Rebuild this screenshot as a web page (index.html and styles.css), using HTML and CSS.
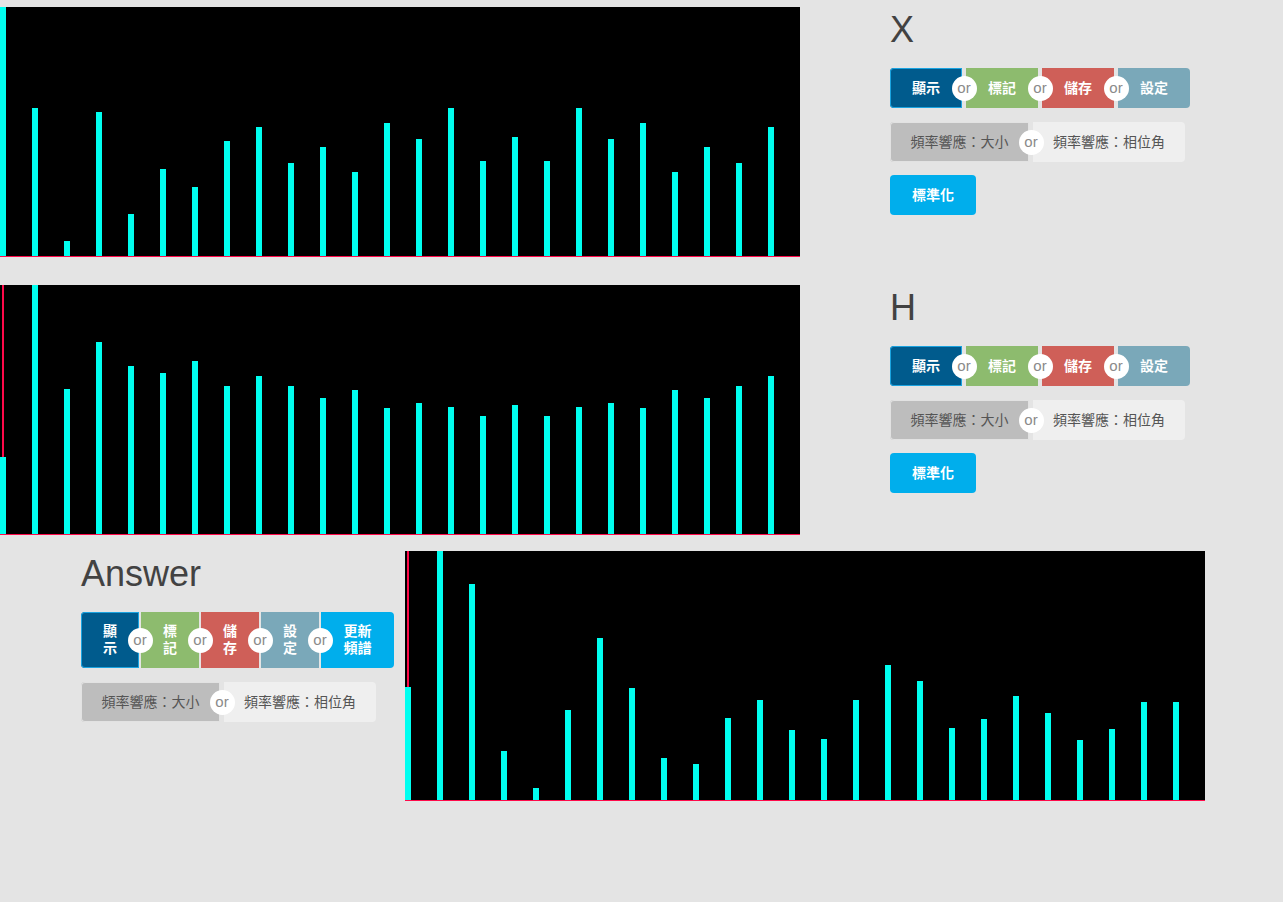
FILE: index.html
```html
<!DOCTYPE html>
<html lang="zh-Hant">
<head>
<meta charset="utf-8">
<title>Spectrum</title>
<link rel="stylesheet" href="styles.css">
</head>
<body>
<div class="page">
  <section class="row">
    <div class="chart">
      <div class="bar" style="height:249px"></div><div class="bar" style="height:148px"></div><div class="bar" style="height:15px"></div><div class="bar" style="height:144px"></div><div class="bar" style="height:42px"></div><div class="bar" style="height:87px"></div><div class="bar" style="height:69px"></div><div class="bar" style="height:115px"></div><div class="bar" style="height:129px"></div><div class="bar" style="height:93px"></div><div class="bar" style="height:109px"></div><div class="bar" style="height:84px"></div><div class="bar" style="height:133px"></div><div class="bar" style="height:117px"></div><div class="bar" style="height:148px"></div><div class="bar" style="height:95px"></div><div class="bar" style="height:119px"></div><div class="bar" style="height:95px"></div><div class="bar" style="height:148px"></div><div class="bar" style="height:117px"></div><div class="bar" style="height:133px"></div><div class="bar" style="height:84px"></div><div class="bar" style="height:109px"></div><div class="bar" style="height:93px"></div><div class="bar" style="height:129px"></div>
    </div>
    <div class="panel">
      <h1 class="title">X</h1>
      <div class="btns colored">
        <button class="btn blue active">顯示</button><span class="or"></span><button class="btn green">標記</button><span class="or"></span><button class="btn red">儲存</button><span class="or"></span><button class="btn slate">設定</button>
      </div>
      <div class="btns toggle">
        <button class="tbtn on">頻率響應：大小</button><span class="or"></span><button class="tbtn off">頻率響應：相位角</button>
      </div>
      <button class="btn cyan solo">標準化</button>
    </div>
  </section>

  <section class="row">
    <div class="chart">
      <div class="bar" style="height:77px"></div><div class="bar" style="height:249px"></div><div class="bar" style="height:145px"></div><div class="bar" style="height:192px"></div><div class="bar" style="height:168px"></div><div class="bar" style="height:161px"></div><div class="bar" style="height:173px"></div><div class="bar" style="height:148px"></div><div class="bar" style="height:158px"></div><div class="bar" style="height:148px"></div><div class="bar" style="height:136px"></div><div class="bar" style="height:144px"></div><div class="bar" style="height:126px"></div><div class="bar" style="height:131px"></div><div class="bar" style="height:127px"></div><div class="bar" style="height:118px"></div><div class="bar" style="height:129px"></div><div class="bar" style="height:118px"></div><div class="bar" style="height:127px"></div><div class="bar" style="height:131px"></div><div class="bar" style="height:126px"></div><div class="bar" style="height:144px"></div><div class="bar" style="height:136px"></div><div class="bar" style="height:148px"></div><div class="bar" style="height:158px"></div>
    </div>
    <div class="panel">
      <h1 class="title">H</h1>
      <div class="btns colored">
        <button class="btn blue active">顯示</button><span class="or"></span><button class="btn green">標記</button><span class="or"></span><button class="btn red">儲存</button><span class="or"></span><button class="btn slate">設定</button>
      </div>
      <div class="btns toggle">
        <button class="tbtn on">頻率響應：大小</button><span class="or"></span><button class="tbtn off">頻率響應：相位角</button>
      </div>
      <button class="btn cyan solo">標準化</button>
    </div>
  </section>

  <section class="row answer">
    <div class="panel answer-panel">
      <h1 class="title">Answer</h1>
      <div class="btns colored stacked">
        <button class="btn blue active">顯<br>示</button><span class="or"></span><button class="btn green">標<br>記</button><span class="or"></span><button class="btn red">儲<br>存</button><span class="or"></span><button class="btn slate">設<br>定</button><span class="or"></span><button class="btn cyan wide">更新<br>頻譜</button>
      </div>
      <div class="btns toggle">
        <button class="tbtn on">頻率響應：大小</button><span class="or"></span><button class="tbtn off">頻率響應：相位角</button>
      </div>
    </div>
    <div class="chart">
      <div class="bar" style="height:113px"></div><div class="bar" style="height:249px"></div><div class="bar" style="height:216px"></div><div class="bar" style="height:49px"></div><div class="bar" style="height:12px"></div><div class="bar" style="height:90px"></div><div class="bar" style="height:162px"></div><div class="bar" style="height:112px"></div><div class="bar" style="height:42px"></div><div class="bar" style="height:36px"></div><div class="bar" style="height:82px"></div><div class="bar" style="height:100px"></div><div class="bar" style="height:70px"></div><div class="bar" style="height:61px"></div><div class="bar" style="height:100px"></div><div class="bar" style="height:135px"></div><div class="bar" style="height:119px"></div><div class="bar" style="height:72px"></div><div class="bar" style="height:81px"></div><div class="bar" style="height:104px"></div><div class="bar" style="height:87px"></div><div class="bar" style="height:60px"></div><div class="bar" style="height:71px"></div><div class="bar" style="height:98px"></div><div class="bar" style="height:98px"></div>
    </div>
  </section>
</div>
</body>
</html>
```

FILE: styles.css
```css
* { box-sizing: border-box; }
html, body { margin: 0; padding: 0; }
body {
  background: #e4e4e4;
  font-family: "Liberation Sans", "Noto Sans CJK TC", Arial, sans-serif;
  color: #444;
}
.page { padding-top: 7px; }

.row { display: flex; align-items: flex-start; }
.row + .row { margin-top: 28px; }
.row.answer { margin-top: 16px; padding-left: 81px; }

.chart {
  position: relative;
  width: 800px;
  height: 250px;
  flex: none;
  background: #000;
  border-bottom: 1px solid #ff0a4a;
  display: flex;
  align-items: flex-end;
  gap: 26px;
}
.chart::before {
  content: "";
  position: absolute;
  left: 2px; top: 0; bottom: 0;
  width: 2px;
  background: #ff0a4a;
}
.bar { position: relative; z-index: 1; width: 6px; flex: none; background: #00fff0; }

.panel { margin-left: 90px; width: 300px; display: flex; flex-direction: column; align-items: flex-start; }
.answer-panel { margin-left: 0; margin-right: 11px; width: 313px; }

.title {
  margin: 0 0 15px 0;
  font-size: 36px;
  line-height: 46px;
  font-weight: 400;
  color: #424242;
  font-family: "Liberation Sans", Arial, sans-serif;
}

.btns { display: flex; align-items: stretch; }
.btns + .btns { margin-top: 14px; }
.btns + .solo { margin-top: 13px; }

.btn, .tbtn {
  border: 0;
  margin: 0;
  font-family: "Liberation Sans", "Noto Sans CJK TC", sans-serif;
  font-size: 14px;
  line-height: 18px;
  padding: 11px 0;
  text-align: center;
  cursor: pointer;
}
.btn { color: #fff; font-weight: 700; width: 72px; }
.btns .btn:first-child { border-radius: 4px 0 0 4px; }
.btns .btn:last-child { border-radius: 0 4px 4px 0; }
.blue { background: #005b8d; }
.blue.active { box-shadow: inset 0 0 0 1px #1aa3e0; }
.green { background: #8dbb6e; }
.red { background: #cf5f58; }
.slate { background: #7aa8b9; }
.cyan { background: #00aeec; }
.solo { width: 86px; border-radius: 4px; }

.stacked .btn { width: 58px; line-height: 17px; }
.stacked .btn.wide { width: 73px; }
.stacked .or { width: 2px; }

.tbtn { color: #555; font-weight: 400; }
.tbtn.on { width: 139px; background: #bdbdbd; border-radius: 4px 0 0 4px; box-shadow: inset 0 0 0 1px #e2e2e2; }
.tbtn.off { width: 152px; background: #efefef; border-radius: 0 4px 4px 0; }

.or { position: relative; width: 4px; flex: none; z-index: 2; }
.or::before {
  content: "or";
  position: absolute;
  top: 50%; left: 50%;
  width: 25px; height: 25px;
  margin: -12.5px 0 0 -12.5px;
  border-radius: 50%;
  background: #fff;
  color: #8a8a8a;
  font-family: "Liberation Sans", sans-serif;
  font-size: 15px;
  line-height: 23px;
  text-align: center;
}
```
